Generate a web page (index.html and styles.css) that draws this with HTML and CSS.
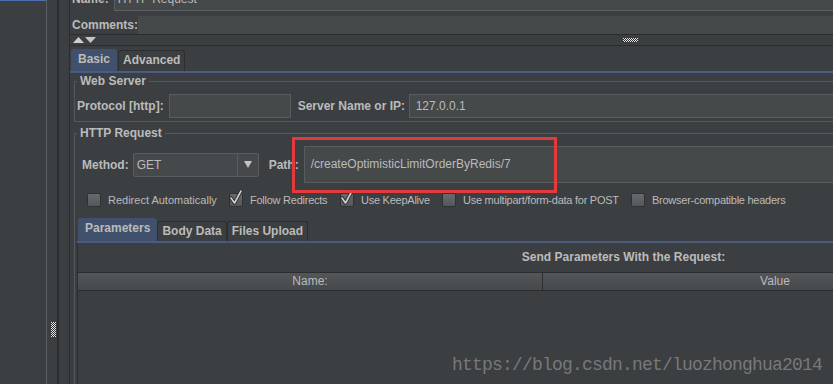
FILE: index.html
```html
<!DOCTYPE html>
<html>
<head>
<meta charset="utf-8">
<title>HTTP Request</title>
<link rel="stylesheet" href="styles.css">
</head>
<body>
<div class="app">
  <div class="tree"><div class="tree-sel"></div></div>
  <div class="split">
    <svg class="grip-v" width="5" height="15" viewBox="0 0 5 15">
      <defs><pattern id="gv" width="2" height="2" patternUnits="userSpaceOnUse"><rect width="2" height="2" fill="#2a2c2d"/><rect width="1" height="1" fill="#e8e8e8"/><rect x="1" y="1" width="1" height="1" fill="#e8e8e8"/></pattern></defs>
      <rect width="5" height="15" fill="url(#gv)"/>
    </svg>
  </div>
  <div class="main">
    <div class="namebox">
      <div class="name-row"><span class="lbl">Name:</span><div class="name-field">HTTP Request</div></div>
      <div class="comments-row"><span class="lbl">Comments:</span><div class="comments-field"></div></div>
    </div>
    <div class="toolbar">
      <svg class="arrows" width="23" height="6" viewBox="0 0 23 6"><polygon points="0,6 5.5,0 11,6" fill="#cfcfcf"/><polygon points="12,0 23,0 17.5,6" fill="#c4c4c4"/></svg>
      <svg class="grip-h" width="15" height="4" viewBox="0 0 15 4">
        <defs><pattern id="gh" width="2" height="2" patternUnits="userSpaceOnUse"><rect width="2" height="2" fill="#2a2c2d"/><rect width="1" height="1" fill="#e8e8e8"/><rect x="1" y="1" width="1" height="1" fill="#e8e8e8"/></pattern></defs>
        <rect width="15" height="4" fill="url(#gh)"/>
      </svg>
    </div>
    <div class="tabs">
      <div class="tab sel basic">Basic</div>
      <div class="tab">Advanced</div>
    </div>
    <div class="tabbody">
      <fieldset class="group web">
        <legend>Web Server</legend>
        <div class="web-row">
          <span class="lbl">Protocol [http]:</span>
          <div class="field proto"></div>
          <span class="lbl server-lbl">Server Name or IP:</span>
          <div class="field server">127.0.0.1</div>
        </div>
      </fieldset>
      <fieldset class="group http">
        <legend>HTTP Request</legend>
        <div class="method-row">
          <span class="lbl">Method:</span>
          <div class="combo">
            <div class="combo-val">GET</div>
            <div class="combo-btn"><svg width="8" height="7" viewBox="0 0 8 7"><polygon points="0,0 8,0 4,7" fill="#c2c2c2"/></svg></div>
          </div>
          <span class="lbl path-lbl">Path:</span>
          <div class="field path">/createOptimisticLimitOrderByRedis/7</div>
        </div>
        <div class="checks">
          <div class="chk c1"><span class="box"></span><span>Redirect Automatically</span></div>
          <div class="chk c2"><span class="box"><svg class="tick" width="16" height="17" viewBox="0 0 16 17"><polyline points="3,9 6.5,14 13,2" fill="none" stroke="#2c2e30" stroke-width="3.6" stroke-linejoin="round" stroke-linecap="round"/><polyline points="3,9 6.5,14 13,2" fill="none" stroke="#d2d2d2" stroke-width="1.6" stroke-linejoin="round" stroke-linecap="round"/></svg></span><span class="tight">Follow Redirects</span></div>
          <div class="chk c3"><span class="box"><svg class="tick" width="16" height="17" viewBox="0 0 16 17"><polyline points="3,9 6.5,14 13,2" fill="none" stroke="#2c2e30" stroke-width="3.6" stroke-linejoin="round" stroke-linecap="round"/><polyline points="3,9 6.5,14 13,2" fill="none" stroke="#d2d2d2" stroke-width="1.6" stroke-linejoin="round" stroke-linecap="round"/></svg></span><span class="tight">Use KeepAlive</span></div>
          <div class="chk c4"><span class="box"></span><span class="tight">Use multipart/form-data for POST</span></div>
          <div class="chk c5"><span class="box"></span><span class="tight">Browser-compatible headers</span></div>
        </div>
        <div class="params">
          <div class="ptabs">
            <div class="tab sel ptab-first">Parameters</div>
            <div class="tab">Body Data</div>
            <div class="tab">Files Upload</div>
          </div>
          <div class="pbody">
            <div class="send">Send Parameters With the Request:</div>
            <div class="thead">
              <div class="th name-col">Name:</div>
              <div class="th value-col">Value</div>
            </div>
            <div class="tbody"></div>
          </div>
        </div>
      </fieldset>
    </div>
  </div>
</div>
<div class="redbox"></div>
<div class="watermark">https://blog.csdn.net/luozhonghua2014</div>
</body>
</html>
```
FILE: styles.css
```css
* { box-sizing: border-box; }
html, body { margin: 0; padding: 0; }
body {
  width: 833px;
  height: 384px;
  overflow: hidden;
  position: relative;
  background: #3c3f41;
  color: #bbbbbb;
  font-family: "Liberation Sans", Arial, sans-serif;
  font-size: 12px;
}
.app { display: flex; width: 833px; height: 384px; overflow: hidden; align-items: flex-start; }
.app > * { flex-shrink: 0; }

.tree { width: 47px; height: 384px; border-right: 1px solid #5d6062; background: #3c3f41; }
.tree-sel { height: 1px; background: #4b6eaf; }

.split {
  width: 22px; height: 384px;
  background: linear-gradient(to right, transparent 10px, #2b2d2e 10px, #2b2d2e 12px, transparent 12px);
  padding: 322px 0 0 4px;
}
.grip-v { display: block; }

.main {
  width: 1120px;
  min-height: 384px;
  border-left: 1px solid #2b2d2e;
  display: flex;
  flex-direction: column;
}
.main > *, .tabbody > * { flex-shrink: 0; }

.lbl { font-weight: bold; font-size: 12px; white-space: nowrap; flex-shrink: 0; }

.namebox { margin-top: -13px; padding-left: 2px; border-bottom: 1px solid #2b2d2e; }
.name-row { display: flex; align-items: center; height: 24px; }
.name-field {
  flex: 1; margin-left: 5px; height: 24px;
  background: #45494a; border: 1px solid #5d6062;
  padding-left: 3px; line-height: 22px;
}
.comments-row { display: flex; align-items: center; height: 18px; margin-top: 5px; }
.comments-field { flex: 1; height: 18px; background: #45494a; }

.toolbar {
  height: 11px; border-bottom: 1px solid #2b2d2e;
  display: flex; align-items: center; padding-left: 3px;
}
.arrows { display: block; }
.grip-h { display: block; margin-left: 527px; }

.tabs {
  height: 27px; display: flex; align-items: flex-end; gap: 1px;
  padding-left: 1px; border-bottom: 2px solid #4a5a80;
}
.tab {
  height: 21px; padding: 0 4px;
  border: 1px solid #2c2e30; border-bottom: none;
  border-radius: 3px 3px 0 0;
  font-weight: bold; font-size: 12px; line-height: 19px;
  white-space: nowrap; flex-shrink: 0;
}
.tab.sel { height: 22px; background: #41506d; border-color: #41506d; line-height: 18px; }
.tab.basic { padding: 0 6px; }

.tabbody { display: flex; flex-direction: column; }
.group {
  margin: 0 0 0 4px; min-width: 0;
  border: 1px solid #56595b;
  padding: 6px 0 3px 2px;
}
.group legend {
  padding: 0 3px; margin: 0;
  font-weight: bold; font-size: 12px; line-height: 14px;
}
.web { margin-top: 1px; }
.http { margin-top: 4px; border-bottom: none; padding-bottom: 0; }

.web-row { display: flex; align-items: center; height: 24px; }
.field { background: #45494a; border: 1px solid #5a5d5f; height: 24px; font-size: 12px; line-height: 22px; white-space: nowrap; }
.proto { width: 122px; margin-left: 5px; flex-shrink: 0; }
.server-lbl { width: 111px; margin-left: 7px; }
.server { flex: 1; padding-left: 6px; }

.method-row { display: flex; align-items: center; height: 37px; padding-left: 5px; }
.combo {
  width: 126px; height: 24px; margin-left: 4px; flex-shrink: 0;
  border: 1px solid #5a5d5f; border-radius: 2px; background: #46494b;
  display: flex;
}
.combo-val { flex: 1; padding-left: 3px; line-height: 22px; }
.combo-btn { width: 21px; border-left: 1px solid #5a5d5f; display: flex; align-items: center; justify-content: center; }
.combo-btn svg { display: block; }
.path-lbl { width: 35px; margin-left: 10px; }
.path { flex: 1; height: 37px; line-height: 35px; padding-left: 6px; }

.checks { display: flex; align-items: center; height: 14px; margin-top: 10px; padding-left: 10px; font-size: 11px; }
.chk { display: flex; align-items: center; gap: 7px; white-space: nowrap; flex-shrink: 0; }
.c1 { width: 142px; }
.c2 { width: 111px; }
.c3 { width: 102px; }
.c4 { width: 189px; }
.tight { letter-spacing: -0.25px; }
.box {
  display: block; flex-shrink: 0;
  width: 14px; height: 14px; position: relative;
  border: 1px solid #2f3133; border-radius: 2px;
  background: linear-gradient(#686b6d, #55585a);
}
.tick { position: absolute; left: -2px; top: -5px; }

.params { margin-top: 12px; }
.ptabs { height: 24px; display: flex; align-items: flex-end; padding-left: 1px; border-bottom: 2px solid #4a5a80; width: 1092px; }
.ptabs .tab { height: 20px; line-height: 18px; }
.ptabs .tab.sel { height: 23px; line-height: 19px; }
.ptabs .ptab-first { padding: 0 6px; }
.pbody { width: 1092px; border-left: 1px solid #2b2d2e; }
.send { height: 29px; text-align: center; font-weight: bold; font-size: 12px; line-height: 29px; }
.thead {
  display: flex; height: 19px;
  border-top: 1px solid #2b2d2e; border-bottom: 1px solid #2b2d2e;
  background: linear-gradient(#53575a, #46494b);
}
.th { text-align: center; font-size: 12px; line-height: 17px; }
.name-col { width: 465px; border-right: 1px solid #2b2d2e; }
.value-col { width: 464px; }
.tbody { height: 120px; }

.redbox {
  position: absolute; left: 292px; top: 137px; width: 265px; height: 56px;
  border: 3px solid #e5393c;
}
.watermark {
  position: absolute; left: 452px; top: 355px;
  font-family: "Liberation Mono", "Courier New", monospace;
  font-size: 18px; letter-spacing: -0.8px; line-height: 20px;
  color: rgba(205, 205, 205, 0.42);
  white-space: nowrap;
}
```
